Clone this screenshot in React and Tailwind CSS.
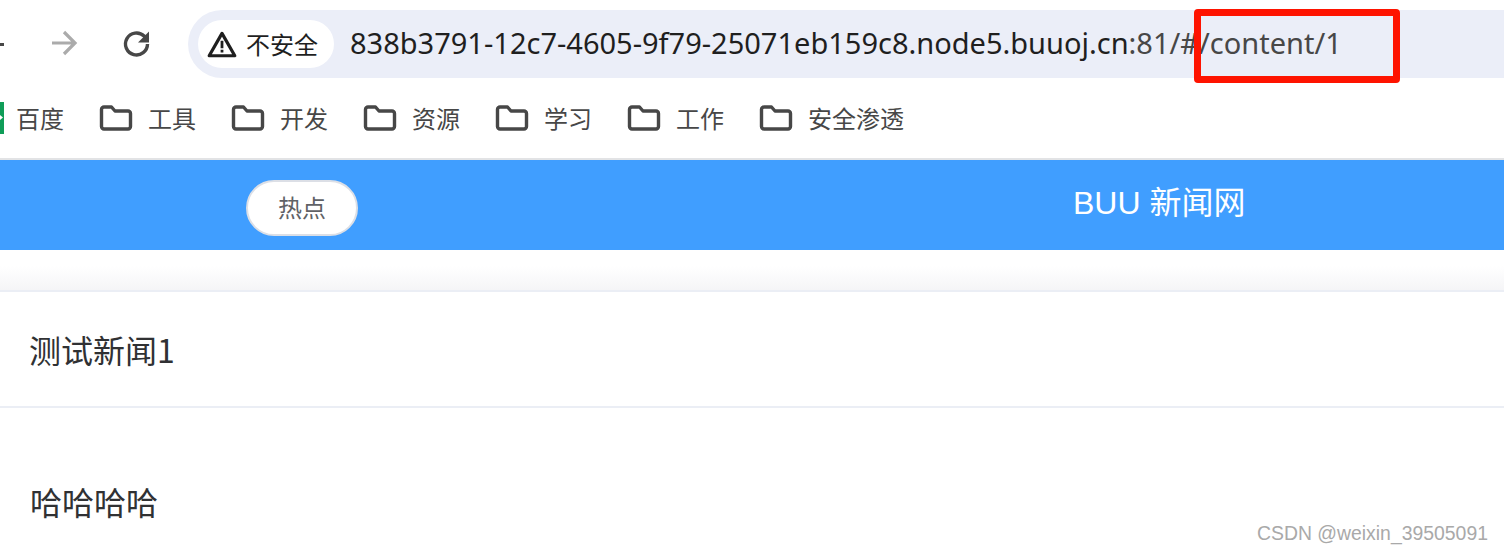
import React from 'react';

const FONT = "font-['Noto_Sans','Noto_Sans_CJK_SC',sans-serif]";
const ZH = "font-['Noto_Sans_CJK_SC',sans-serif]";

const folders = ['工具', '开发', '资源', '学习', '工作', '安全渗透'];

const FolderIcon = () => (
    <svg width="34" height="26" viewBox="0 0 34 26" fill="none" stroke="#474747" strokeWidth="3.4" strokeLinejoin="round" className="shrink-0">
        <path d="M2.5 4.5a2.5 2.5 0 0 1 2.5-2.5h7.5l3.5 4h13a2.5 2.5 0 0 1 2.5 2.5v13a2.5 2.5 0 0 1-2.5 2.5H5a2.5 2.5 0 0 1-2.5-2.5z" />
    </svg>
);

const App = () => {
    return (
        <div className={`relative w-[1504px] h-[552px] overflow-hidden bg-white ${FONT}`}>
            {/* browser toolbar */}
            <div className="h-[88px] flex items-start">
                <div className="w-[4px] h-[3px] mt-[43px] bg-[#474747]"></div>
                <svg width="30" height="30" viewBox="0 0 30 30" fill="none" stroke="#ababab" strokeWidth="3.2" className="ml-[45px] mt-[28px]">
                    <path d="M3 15h22M15 4l11 11-11 11" />
                </svg>
                <svg width="30" height="30" viewBox="0 0 30 30" fill="none" stroke="#474747" strokeWidth="3.4" className="ml-[43px] mt-[29px]">
                    <path d="M25.500 15a11 11 0 1 1-3.400-8L26 11" />
                    <path d="M27 2.500v11H16z" fill="#474747" stroke="none" />
                </svg>
                <div className="ml-[36px] mt-[10px] w-[1316px] h-[68px] rounded-l-[34px] bg-[#ebeef8] flex items-center pl-[10px]">
                    <div className="w-[136px] h-[48px] rounded-full bg-white flex items-center pl-[8px]">
                        <svg width="32" height="28" viewBox="0 0 30 26" className="shrink-0">
                            <path d="M15 3 27 24H3z" fill="none" stroke="#1f1f1f" strokeWidth="3" strokeLinejoin="round" />
                            <path d="M13.700 10h2.600v7h-2.600zM13.700 18.500h2.600v2.500h-2.600z" fill="#1f1f1f" />
                        </svg>
                        <span className={`ml-[8px] text-[24px] leading-none text-[#1f1f1f] ${ZH}`}>不安全</span>
                    </div>
                    <div className="ml-[16px] mb-[4px] text-[29px] leading-none whitespace-nowrap text-[#1f1f1f]">
                        838b3791-12c7-4605-9f79-25071eb159c8.node5.buuoj.cn<span className="text-[#474747]">:81/#/content/1</span>
                    </div>
                </div>
            </div>

            {/* bookmarks bar */}
            <div className="h-[72px] pb-[11px] flex items-center border-b-2 border-[#e2e3e5] box-border">
                <svg width="4" height="32" viewBox="0 0 4 32" className="shrink-0">
                    <rect width="4" height="32" fill="#0f9d58" />
                    <path d="M0 13l3 2.500-3 2.500z" fill="#fff" />
                </svg>
                <span className={`ml-[12px] w-[83px] text-[24px] leading-none text-[#474747] ${ZH}`}>百度</span>
                {folders.map((name) => (
                    <div key={name} className="w-[132px] flex items-center">
                        <FolderIcon />
                        <span className={`ml-[15px] text-[24px] leading-none whitespace-nowrap text-[#474747] ${ZH}`}>{name}</span>
                    </div>
                ))}
            </div>

            {/* site header */}
            <div className="h-[90px] bg-[#409eff] flex items-center">
                <div className="ml-[246px] mt-[6px] w-[112px] h-[56px] rounded-full bg-white border-2 border-[#dcdfe6] flex items-center justify-center pb-[2px]">
                    <span className={`text-[24px] leading-none text-[#606266] ${ZH}`}>热点</span>
                </div>
                <div className={`ml-[715px] mb-[5px] text-[32px] leading-none whitespace-nowrap text-white font-['Liberation_Sans','Noto_Sans_CJK_SC',sans-serif]`}>BUU 新闻网</div>
            </div>

            <div className="h-[42px] bg-gradient-to-b from-white from-40% to-[#f5f5f7] border-b-2 border-[#ebeef5]"></div>

            {/* article */}
            <div className="h-[116px] flex items-center pl-[29px] border-b-2 border-[#ebeef5]">
                <h1 className={`text-[32px] leading-none text-[#303133] ${ZH}`}>测试新闻1</h1>
            </div>
            <p className={`mt-[77px] pl-[30px] text-[32px] leading-none text-[#303133] ${ZH}`}>哈哈哈哈</p>

            {/* annotation drawn over the screenshot */}
            <div className="absolute left-[1194px] top-[9px] w-[206px] h-[74px] rounded-[4px] border-[7px] border-[#fe1300]"></div>
            <div className="absolute left-[1257px] top-[524px] text-[19.4px] leading-none whitespace-nowrap text-[#a9a9a9] font-['Liberation_Sans',sans-serif]">CSDN @weixin_39505091</div>
        </div>
    );
};

export default App;
